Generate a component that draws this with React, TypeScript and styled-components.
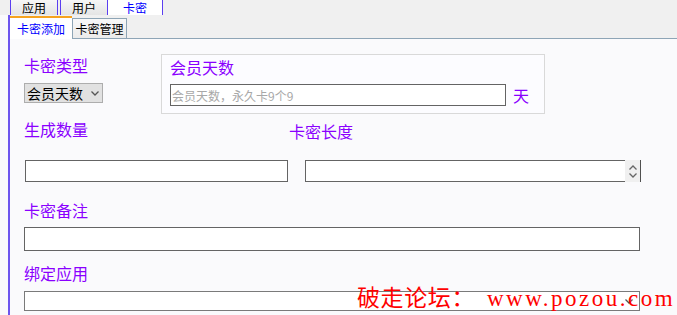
import React from "react";
import styled, { createGlobalStyle } from "styled-components";

const GlobalStyle = createGlobalStyle`
  html, body {
    margin: 0;
    padding: 0;
    background: #fafafc;
  }
  body {
    font-family: "Noto Sans CJK SC", "Noto Sans", sans-serif;
    overflow: hidden;
  }
`;

const Page = styled.div`
  width: 677px;
  height: 315px;
  position: relative;
  overflow: hidden;
  display: flex;
  flex-direction: column;
  background: #fafafc;
`;

const TopBar = styled.div`
  flex: none;
  height: 15px;
  display: flex;
  padding-left: 10px;
  background: #f0f0f0;
`;

const TopTab = styled.div<{ $width: number; $active?: boolean; $noLeft?: boolean }>`
  box-sizing: border-box;
  width: ${(p) => p.$width}px;
  height: 15px;
  border-left: ${(p) => (p.$noLeft ? "none" : "1px solid #5b3ff0")};
  border-right: 1px solid #5b3ff0;
  background: ${(p) => (p.$active ? "#ffffff" : "linear-gradient(#f7f7f7, #e4e4e4)")};
  color: ${(p) => (p.$active ? "#0000ff" : "#000000")};
  font-size: 12px;
  line-height: 15px;
  text-align: center;
  &:first-child {
    margin-right: 2px;
  }
`;

const Panel = styled.div`
  flex: 1;
  margin-left: 8px;
  border-left: 2px solid #6d55ee;
  display: flex;
  flex-direction: column;
`;

const SubTabBar = styled.div`
  flex: none;
  height: 23px;
  display: flex;
  align-items: flex-end;
  background: #f0f0f0;
  border-bottom: 1px solid #8ea5b6;
`;

const SubTab = styled.div<{ $width: number; $active?: boolean }>`
  box-sizing: border-box;
  width: ${(p) => p.$width}px;
  font-size: 12px;
  text-align: center;
  ${(p) =>
    p.$active
      ? `
    height: 23px;
    margin-bottom: -1px;
    border-top: 2px solid #f6a31f;
    background: #ffffff;
    color: #0000ff;
    line-height: 21px;
  `
      : `
    height: 20px;
    border: 1px solid #8ea5b6;
    border-bottom: none;
    background: linear-gradient(#f8f8f8, #ebebeb);
    color: #000000;
    line-height: 19px;
  `}
`;

const Body = styled.div`
  flex: 1;
  display: flex;
  flex-direction: column;
  padding: 15px 0 0 14px;
`;

const Label = styled.div<{ $drop?: number }>`
  font-size: 16px;
  line-height: 18px;
  color: #8a00ff;
  white-space: nowrap;
  padding-top: ${(p) => p.$drop || 0}px;
  margin-bottom: ${(p) => -(p.$drop || 0)}px;
`;

const TypeRow = styled.div`
  display: flex;
  align-items: flex-start;
  height: 61px;
`;

const TypeColumn = styled.div`
  width: 137px;
  padding-top: 2px;
  display: flex;
  flex-direction: column;
`;

const TypeSelect = styled.div`
  box-sizing: border-box;
  margin-top: 9px;
  width: 79px;
  height: 20px;
  background: #e1e1e1;
  border: 1px solid #adadad;
  display: flex;
  align-items: center;
  justify-content: space-between;
  padding: 0 3px 0 2px;
  font-size: 14px;
  color: #000000;
`;

const GroupBox = styled.div`
  box-sizing: border-box;
  width: 384px;
  height: 60px;
  border: 1px solid #d9d9d9;
  background: #fcfcff;
  padding: 3px 0 0 8px;
`;

const InputLine = styled.div`
  display: flex;
  align-items: center;
  margin-top: 7px;
`;

const TextInput = styled.input<{ $width: number; $height: number }>`
  box-sizing: border-box;
  display: block;
  width: ${(p) => p.$width}px;
  height: ${(p) => p.$height}px;
  border: 1px solid #646464;
  background: #ffffff;
  outline: none;
  padding: 0 0 0 1px;
  margin: 0;
  font-family: "Noto Sans CJK SC", "Noto Sans", sans-serif;
  font-size: 12px;
  color: #000000;
  &::placeholder {
    color: #a8a8a8;
  }
`;

const Unit = styled.span`
  margin-left: 7px;
  font-size: 16px;
  color: #8a00ff;
`;

const LabelRow = styled.div`
  display: grid;
  grid-template-columns: 265px auto;
  align-items: start;
  height: 18px;
  margin-top: 5px;
`;

const InputRow = styled.div`
  display: flex;
  gap: 17px;
  margin-top: 22px;
  padding-left: 1px;
`;

const NumberField = styled.div`
  display: flex;
`;

const NumberInput = styled(TextInput)`
  border-right: none;
`;

const Spinner = styled.div`
  box-sizing: border-box;
  width: 16px;
  height: 22px;
  background: #f0f0f0;
  border-right: 1px solid #505050;
  display: flex;
  flex-direction: column;
  align-items: center;
  justify-content: center;
  gap: 3px;
`;

const Block = styled.div<{ $gap: number }>`
  margin-top: ${(p) => p.$gap}px;
`;

const AppSelect = styled.div`
  box-sizing: border-box;
  width: 616px;
  height: 20px;
  border: 1px solid #7a7a7a;
  background: #ffffff;
  display: flex;
  align-items: center;
  justify-content: flex-end;
  padding-right: 6px;
`;

const Watermark = styled.div`
  position: absolute;
  left: 357px;
  top: 282px;
  color: #ff0000;
  font-size: 23px;
  line-height: 28px;
  white-space: nowrap;
  pointer-events: none;
`;

const WatermarkCn = styled.span`
  letter-spacing: 0.6px;
`;

const WatermarkEn = styled.span`
  font-family: "Liberation Serif", serif;
  letter-spacing: 2.5px;
  margin-left: 12px;
`;

const Chevron = ({ up, color = "#555" }: { up?: boolean; color?: string }) => (
  <svg width="8" height="5" viewBox="0 0 8 5">
    <polyline
      points={up ? "0.5,4.5 4,1 7.5,4.5" : "0.5,0.5 4,4 7.5,0.5"}
      fill="none"
      stroke={color}
      strokeWidth="1.3"
    />
  </svg>
);

export default function App() {
  return (
    <Page>
      <GlobalStyle />
      <TopBar>
        <TopTab $width={48}>应用</TopTab>
        <TopTab $width={48}>用户</TopTab>
        <TopTab $width={55} $active $noLeft>
          卡密
        </TopTab>
      </TopBar>
      <Panel>
        <SubTabBar>
          <SubTab $width={62} $active>
            卡密添加
          </SubTab>
          <SubTab $width={55}>卡密管理</SubTab>
        </SubTabBar>
        <Body>
          <TypeRow>
            <TypeColumn>
              <Label>卡密类型</Label>
              <TypeSelect>
                <span>会员天数</span>
                <Chevron />
              </TypeSelect>
            </TypeColumn>
            <GroupBox>
              <Label>会员天数</Label>
              <InputLine>
                <TextInput $width={336} $height={22} placeholder="会员天数，永久卡9个9" />
                <Unit>天</Unit>
              </InputLine>
            </GroupBox>
          </TypeRow>

          <LabelRow>
            <Label>生成数量</Label>
            <Label $drop={2}>卡密长度</Label>
          </LabelRow>
          <InputRow>
            <TextInput $width={263} $height={22} />
            <NumberField>
              <NumberInput $width={320} $height={22} />
              <Spinner>
                <Chevron up color="#666" />
                <Chevron color="#666" />
              </Spinner>
            </NumberField>
          </InputRow>

          <Block $gap={19}>
            <Label>卡密备注</Label>
          </Block>
          <Block $gap={8}>
            <TextInput $width={616} $height={24} />
          </Block>

          <Block $gap={13}>
            <Label>绑定应用</Label>
          </Block>
          <Block $gap={9}>
            <AppSelect>
              <Chevron />
            </AppSelect>
          </Block>
        </Body>
      </Panel>
      <Watermark>
        <WatermarkCn>破走论坛：</WatermarkCn>
        <WatermarkEn>www.pozou.com</WatermarkEn>
      </Watermark>
    </Page>
  );
}
